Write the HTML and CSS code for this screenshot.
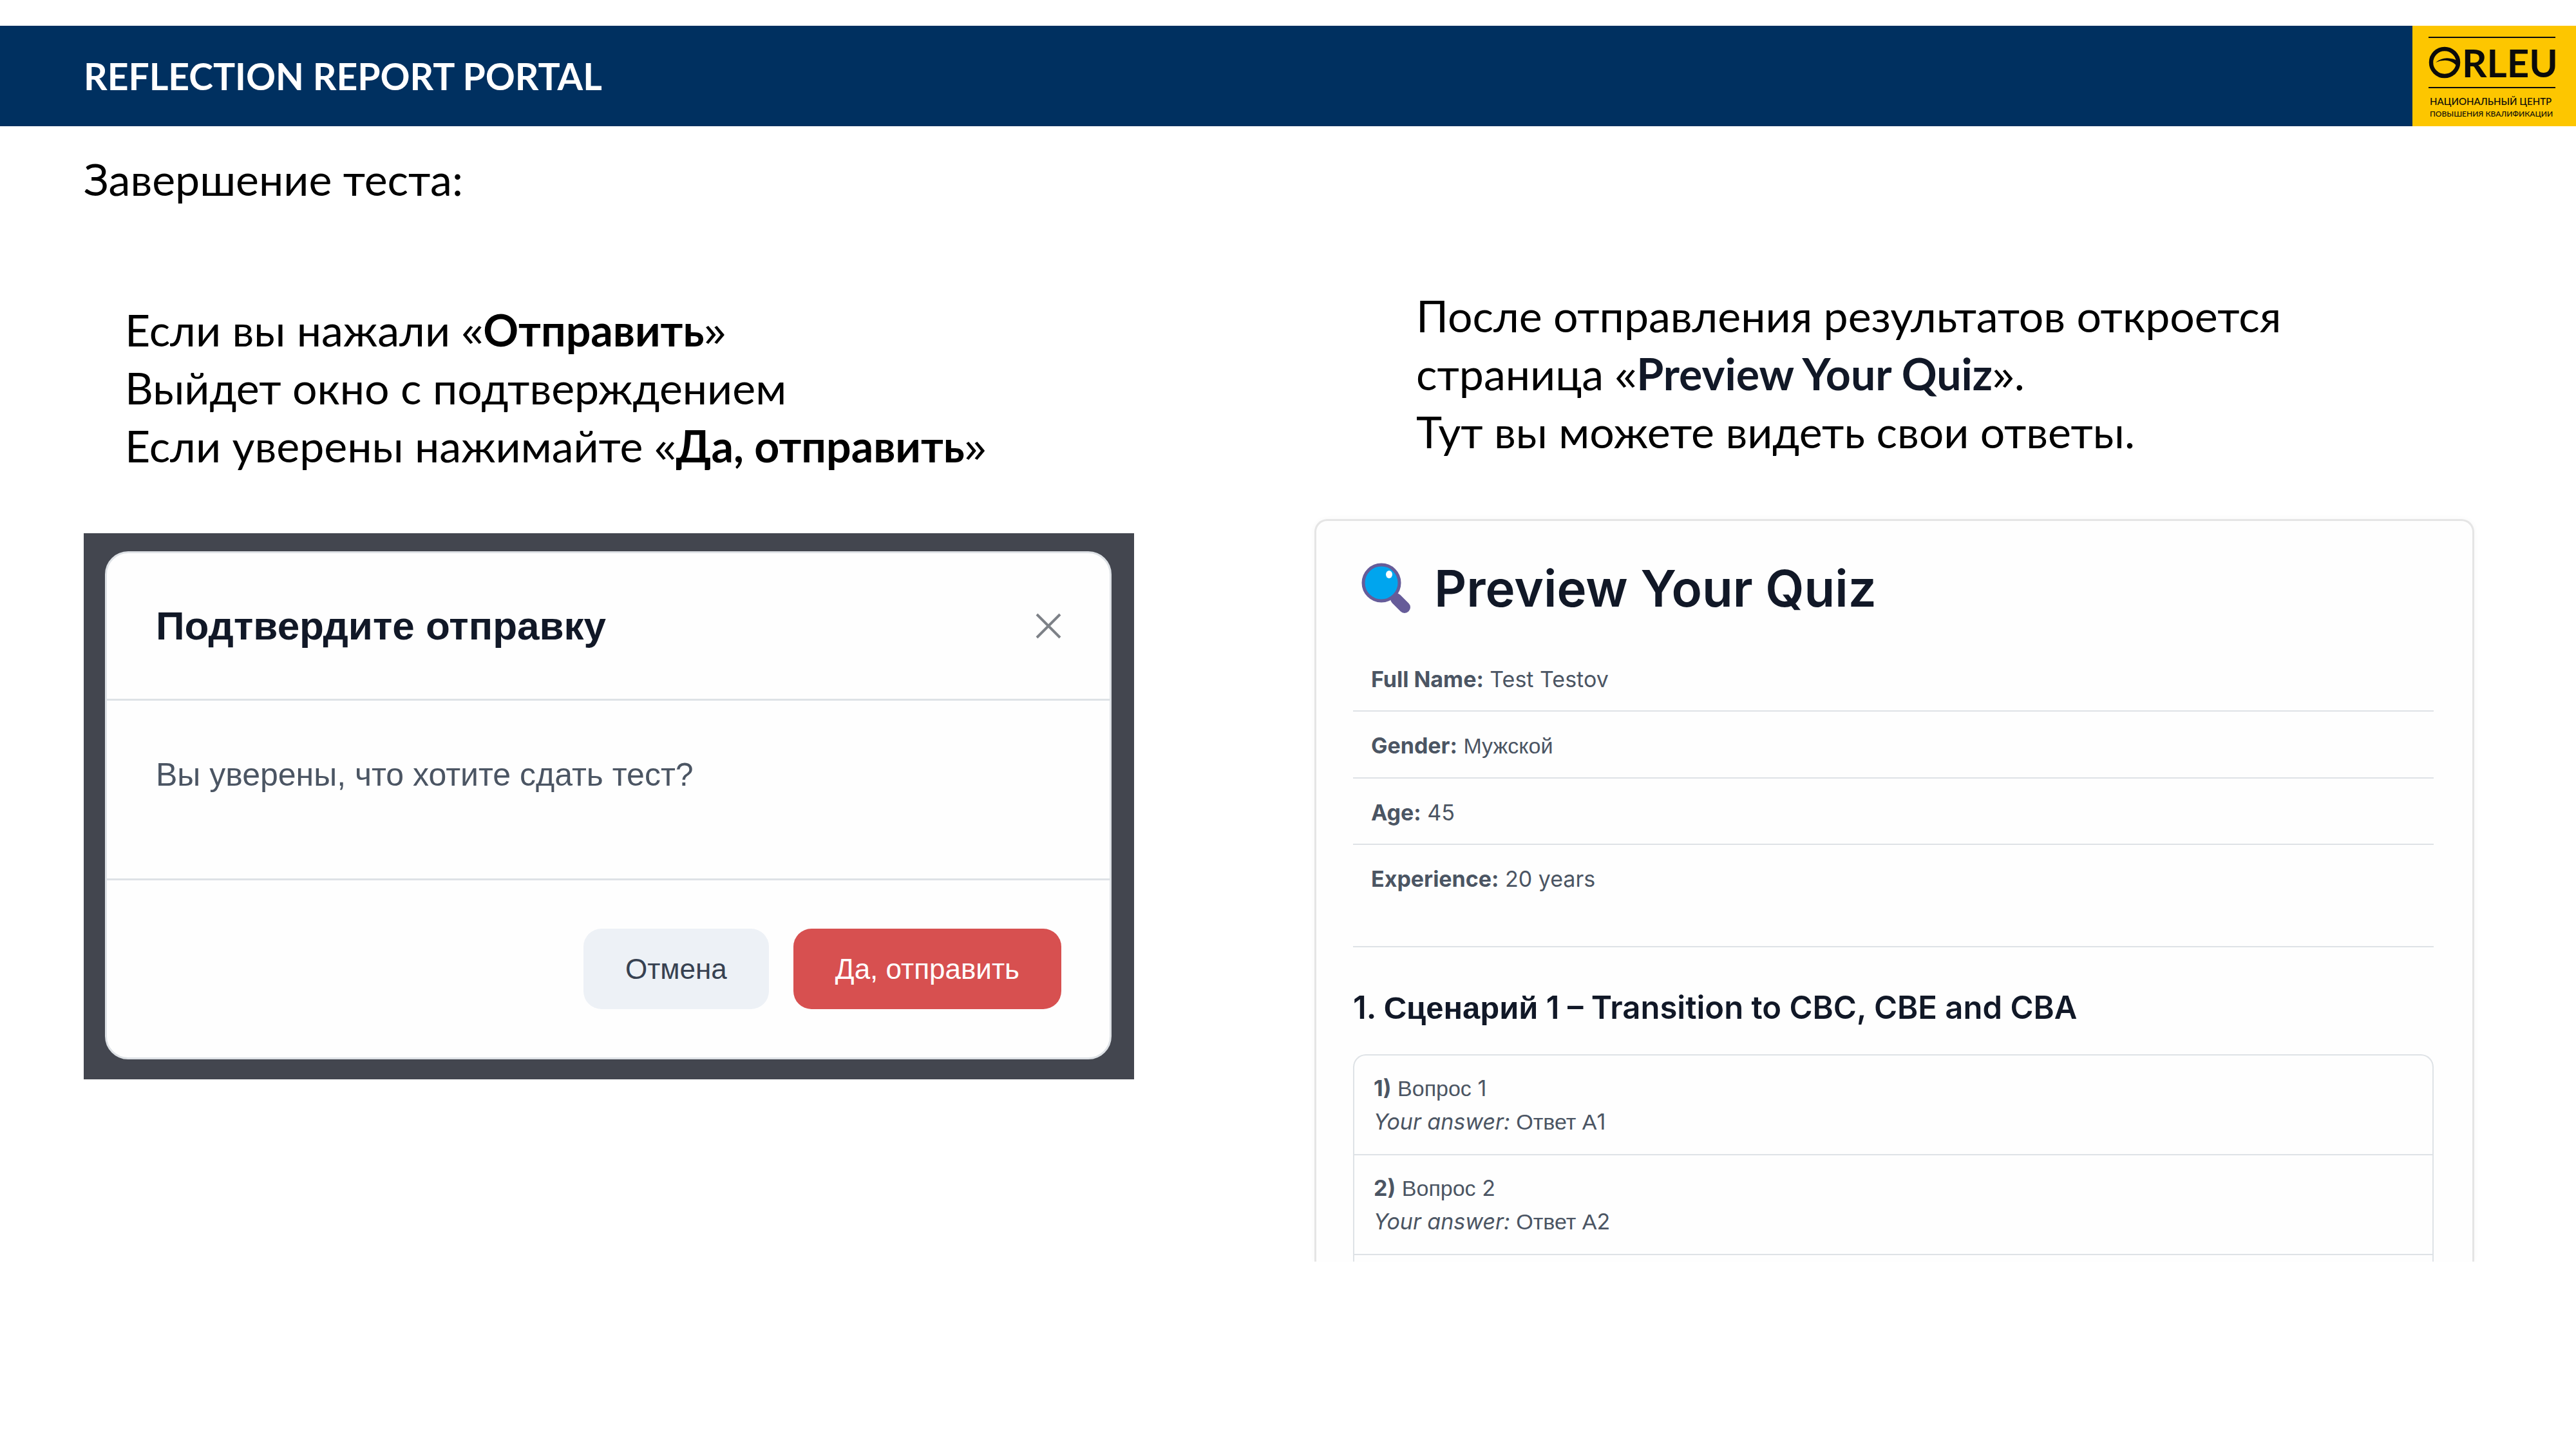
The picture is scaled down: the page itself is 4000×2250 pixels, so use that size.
FILE: index.html
```html
<!DOCTYPE html>
<html lang="ru">
<head>
<meta charset="utf-8">
<meta name="viewport" content="width=device-width, initial-scale=1">
<title>Reflection Report Portal</title>
<link rel="stylesheet" href="styles.css">
</head>
<body>
<header class="topbar">
  <h1 class="topbar-title">REFLECTION REPORT PORTAL</h1>
  <div class="logo">
    <div class="logo-word">
      <svg class="logo-mark" viewBox="0 0 50 52" aria-hidden="true">
        <circle cx="25" cy="26" r="21" fill="none" stroke="#0b0b0b" stroke-width="6.5"/>
        <path d="M11 26 Q22 17 35 20 Q42 21 47 25 L46 34 Q40 25 29 23 Q20 22 11 26Z" fill="#0b0b0b"/>
      </svg>
      <span>RLEU</span>
    </div>
    <div class="logo-line">НАЦИОНАЛЬНЫЙ ЦЕНТР</div>
    <div class="logo-line logo-line-small">ПОВЫШЕНИЯ КВАЛИФИКАЦИИ</div>
  </div>
</header>

<main class="page">
  <h2 class="page-title">Завершение теста:</h2>
  <div class="columns">
    <section class="column column-left">
      <p class="note">Если вы нажали <span class="quote">«</span><b>Отправить</b><span class="quote">»</span><br>Выйдет окно с подтверждением<br>Если уверены нажимайте <span class="quote">«</span><b>Да, отправить</b><span class="quote">»</span></p>
      <div class="backdrop">
        <div class="modal" role="dialog" aria-labelledby="modal-title">
          <div class="modal-header">
            <h3 class="modal-title" id="modal-title">Подтвердите отправку</h3>
            <button class="close" type="button" aria-label="Закрыть">
              <svg viewBox="0 0 40 40" aria-hidden="true"><path d="M2 2L38 38M38 2L2 38" stroke="#7d8187" stroke-width="4" fill="none"/></svg>
            </button>
          </div>
          <p class="modal-body">Вы уверены, что хотите сдать тест?</p>
          <div class="modal-footer">
            <button class="btn btn-cancel" type="button">Отмена</button>
            <button class="btn btn-danger" type="button">Да, отправить</button>
          </div>
        </div>
      </div>
    </section>

    <section class="column">
      <p class="note note-right">После отправления результатов откроется<br>страница <span class="quote">«</span><b class="dark">Preview Your Quiz</b><span class="quote">»</span>.<br>Тут вы можете видеть свои ответы.</p>
      <div class="card">
        <h3 class="card-title">
          <svg class="lens" viewBox="0 0 80 80" aria-hidden="true">
            <path d="M55 56L68 69" stroke="#665c99" stroke-width="18" stroke-linecap="round"/>
            <path d="M46 46L56 56" stroke="#665c99" stroke-width="8"/>
            <circle cx="32" cy="31" r="28" fill="#00a5ee" stroke="#665c99" stroke-width="5"/>
            <ellipse cx="44" cy="18" rx="5" ry="6" fill="#fff"/>
          </svg>
          <span>Preview Your Quiz</span>
        </h3>
        <ul class="facts">
          <li><b>Full Name:</b> Test Testov</li>
          <li><b>Gender:</b> <span class="cyr">Мужской</span></li>
          <li><b>Age:</b> 45</li>
          <li><b>Experience:</b> 20 years</li>
        </ul>
        <h4 class="scenario">1. <span class="cyr">Сценарий</span> 1 – Transition to CBC, CBE and CBA</h4>
        <ul class="answers">
          <li><b>1)</b> <span class="cyr">Вопрос</span> 1<br><i>Your answer:</i> <span class="cyr">Ответ А</span>1</li>
          <li><b>2)</b> <span class="cyr">Вопрос</span> 2<br><i>Your answer:</i> <span class="cyr">Ответ А</span>2</li>
        </ul>
      </div>
    </section>
  </div>
</main>
</body>
</html>
```
FILE: styles.css
```css
* {
  box-sizing: border-box;
  margin: 0;
  padding: 0;
}

body {
  background: #fff;
  color: #000;
  font-family: Lato, "Open Sans", sans-serif;
  padding-top: 40px;
}

.topbar {
  display: flex;
  align-items: stretch;
  justify-content: space-between;
  background: #003060;
  min-height: 156px;
}

.topbar-title {
  align-self: center;
  padding-left: 130px;
  color: #fff;
  font-size: 57px;
  font-weight: 700;
  line-height: 72px;
}

.logo {
  width: 254px;
  padding: 17px 32px 0 25px;
  background: #fdc600;
  color: #0b0b0b;
}

.logo-word {
  display: flex;
  align-items: center;
  gap: 2px;
  height: 80px;
  border-top: 2px solid #0b0b0b;
  border-bottom: 2px solid #0b0b0b;
  font-size: 60px;
  font-weight: 700;
  line-height: 76px;
}

.logo-mark {
  flex: none;
  width: 50px;
  height: 52px;
}

.logo-line {
  padding: 10px 0 0 2px;
  font-size: 15px;
  font-weight: 500;
  line-height: 20px;
  white-space: nowrap;
}

.logo-line-small {
  padding-top: 0;
  font-size: 12px;
}

.page {
  padding: 37px 158px 0 130px;
}

.page-title {
  font-size: 68px;
  font-weight: 400;
  line-height: 90px;
}

.columns {
  display: grid;
  grid-template-columns: 1631fr 1801fr;
  column-gap: 280px;
  align-items: start;
  padding-top: 122px;
}

.column-left {
  padding-top: 22px;
}

.note {
  margin-bottom: 91px;
  padding-left: 64px;
  font-size: 68px;
  line-height: 90px;
}

.note-right {
  padding-left: 158px;
}

.quote {
  font-family: "Open Sans", sans-serif;
  line-height: 1;
}

.dark {
  color: #111827;
}

.backdrop {
  padding: 28px 35px 31px 33px;
  background: #43464f;
  font-family: "Liberation Sans", Arial, sans-serif;
}

.modal {
  border: 3px solid #dee2e6;
  border-radius: 36px;
  background: #fefefe;
}

.modal-header {
  display: flex;
  align-items: center;
  justify-content: space-between;
  padding: 76px 75px 76px 76px;
  border-bottom: 3px solid #dee2e6;
}

.modal-title {
  color: #111827;
  font-size: 62px;
  font-weight: 700;
  line-height: 74px;
}

.close {
  width: 40px;
  height: 40px;
  border: 0;
  background: none;
}

.close svg {
  display: block;
}

.modal-body {
  padding: 78px 76px 124px;
  border-bottom: 3px solid #dee2e6;
  color: #4b5563;
  font-size: 50px;
  line-height: 74px;
}

.modal-footer {
  display: flex;
  justify-content: flex-end;
  gap: 38px;
  padding: 75px;
}

.btn {
  padding: 0 65px;
  border: 0;
  border-radius: 28px;
  font-family: inherit;
  font-size: 44px;
  line-height: 125px;
}

.btn-cancel {
  background: #edf1f6;
  color: #374151;
}

.btn-danger {
  background: #d75050;
  color: #fff;
}

.card {
  padding: 61px 60px 0 57px;
  border: 3px solid #e5e5e5;
  border-bottom: 0;
  border-radius: 20px 20px 0 0;
  background: #fefefe;
  box-shadow: 0 0 8px rgba(0, 0, 0, 0.04);
  clip-path: inset(-12px -12px 0 -12px);
  color: #4b5563;
  font-family: Inter, sans-serif;
  font-size: 34px;
}

.card-title {
  display: flex;
  align-items: center;
  gap: 34px;
  padding-left: 12px;
  color: #111827;
  font-size: 78px;
  font-weight: 600;
  line-height: 88px;
}

.lens {
  flex: none;
  width: 80px;
  height: 80px;
}

.facts {
  margin-top: 44px;
  padding-bottom: 56px;
  border-bottom: 2px solid #dee2e6;
  list-style: none;
}

.facts li {
  padding: 26px 28px 22px;
  border-bottom: 2px solid #dee2e6;
  line-height: 53px;
}

.facts li:last-child {
  border-bottom: 0;
}

.cyr {
  font-family: "Liberation Sans", Arial, sans-serif;
}

.scenario {
  margin: 62px 0 40px;
  color: #111827;
  font-size: 49px;
  font-weight: 600;
  line-height: 64px;
}

.answers {
  padding-bottom: 10px;
  border: 2px solid #dee2e6;
  border-bottom: 0;
  border-radius: 20px 20px 0 0;
  list-style: none;
}

.answers li {
  padding: 25px 30px 24px;
  border-bottom: 2px solid #dee2e6;
  line-height: 51px;
}
```
